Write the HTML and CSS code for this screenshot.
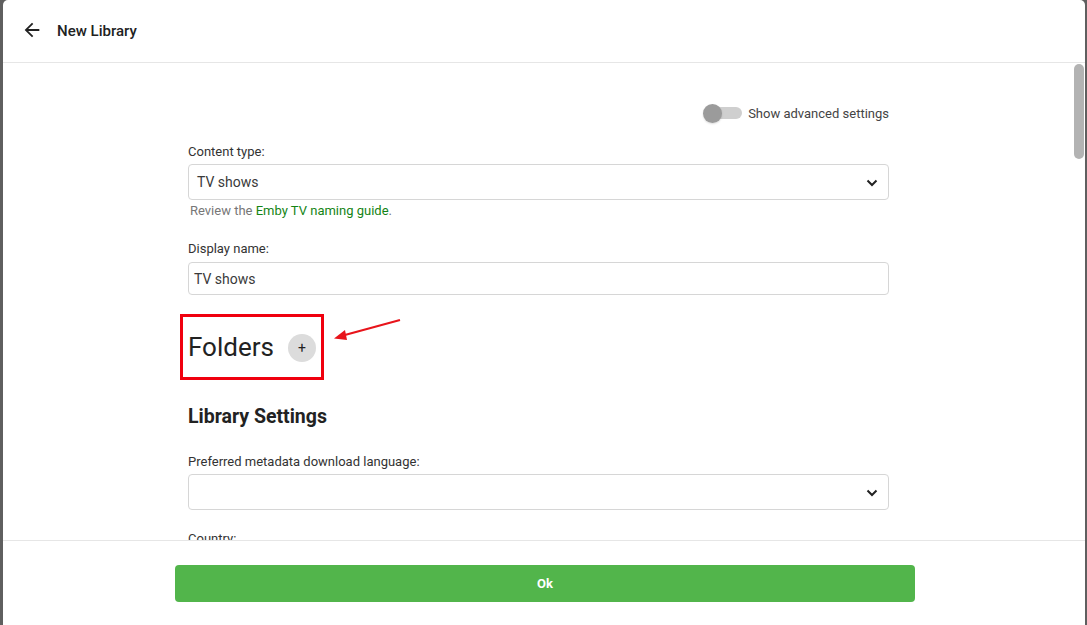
FILE: index.html
```html
<!DOCTYPE html>
<html>
<head>
<meta charset="utf-8">
<link rel="stylesheet" href="styles.css">
</head>
<body>
<div class="dialog">
  <header class="header">
    <button class="back" aria-label="Back">
      <svg viewBox="0 0 24 24" width="22" height="22"><path d="M20 11H7.83l5.59-5.59L12 4l-8 8 8 8 1.41-1.41L7.83 13H20v-2z" fill="#222"/></svg>
    </button>
    <h1 class="title">New Library</h1>
  </header>
  <div class="body">
    <div class="scroll">
      <div class="column">
        <div class="toggle-row">
          <span class="toggle"><span class="track"></span><span class="knob"></span></span>
          <span class="toggle-label">Show advanced settings</span>
        </div>

        <div class="field first">
          <div class="label">Content type:</div>
          <div class="select">
            <span>TV shows</span>
            <svg class="chev" viewBox="0 0 12 8" width="12" height="8"><polyline points="1.5,1.5 6,6 10.5,1.5" fill="none" stroke="#222" stroke-width="2"/></svg>
          </div>
          <div class="help">Review the <a class="link">Emby TV naming guide</a>.</div>
        </div>

        <div class="field second">
          <div class="label">Display name:</div>
          <div class="input">TV shows</div>
        </div>

        <div class="folders-row">
          <div class="highlight">
            <h2 class="folders">Folders</h2>
            <span class="add">+</span>
          </div>
          <svg class="arrow" width="80" height="30" viewBox="0 0 80 30">
            <line x1="71" y1="4" x2="14" y2="19.5" stroke="#e8141b" stroke-width="2.2"/>
            <polygon points="5,22.5 16,14 18,24" fill="#e8141b"/>
          </svg>
        </div>

        <h3 class="section">Library Settings</h3>

        <div class="field third">
          <div class="label">Preferred metadata download language:</div>
          <div class="select">
            <span></span>
            <svg class="chev" viewBox="0 0 12 8" width="12" height="8"><polyline points="1.5,1.5 6,6 10.5,1.5" fill="none" stroke="#222" stroke-width="2"/></svg>
          </div>
        </div>

        <div class="field fourth">
          <div class="label">Country:</div>
        </div>
      </div>
    </div>
    <div class="scrollbar"><div class="thumb"></div></div>
  </div>
  <footer class="footer">
    <button class="ok">Ok</button>
  </footer>
</div>
</body>
</html>
```

FILE: styles.css
```css
* { box-sizing: border-box; }
html, body {
  margin: 0;
  height: 100%;
}
body {
  background: #5f5f5f;
  font-family: Roboto, "Liberation Sans", Arial, sans-serif;
  color: #333;
  overflow: hidden;
}
.dialog {
  margin-left: 3px;
  width: 1082px;
  height: 625px;
  background: #fff;
  border-radius: 5px 5px 0 0;
  display: flex;
  flex-direction: column;
}
.header {
  height: 63px;
  flex: none;
  border-bottom: 1px solid #e6e6e6;
  display: flex;
  align-items: center;
  padding-left: 18px;
}
.back {
  border: 0;
  background: none;
  padding: 0;
  width: 22px;
  height: 22px;
  display: flex;
  margin-top: -2px;
}
.title {
  margin: 0 0 0 14px;
  font-size: 15px;
  font-weight: 500;
  color: #222;
  margin-top: -1px;
}
.body {
  flex: 1;
  display: flex;
  min-height: 0;
}
.scroll {
  flex: 1;
  overflow: hidden;
  display: flex;
  justify-content: center;
}
.column {
  width: 701px;
  padding-top: 40px;
}
.scrollbar {
  width: 11px;
  flex: none;
  padding-top: 1px;
  padding-right: 1px;
}
.thumb {
  height: 95px;
  background: #b3b3b3;
  border-radius: 5px;
}
.toggle-row {
  display: flex;
  justify-content: flex-end;
  align-items: center;
  height: 20px;
}
.toggle {
  position: relative;
  width: 39px;
  height: 20px;
  display: inline-block;
}
.track {
  position: absolute;
  left: 2px;
  right: 0;
  top: 4px;
  height: 12px;
  border-radius: 6px;
  background: #cfcfcf;
}
.knob {
  position: absolute;
  left: 0;
  top: 1px;
  width: 19px;
  height: 19px;
  border-radius: 50%;
  background: #9b9b9b;
  box-shadow: 0 1px 2px rgba(0,0,0,0.15);
}
.toggle-label {
  margin-left: 6px;
  font-size: 13px;
  color: #444;
}
.label {
  font-size: 13px;
  line-height: 16px;
  color: #333;
  margin-bottom: 4px;
}
.field.first { margin-top: 21px; }
.field.second { margin-top: 22px; }
.field.second .label { margin-bottom: 5px; }
.field.third { margin-top: 25px; }
.field.fourth { margin-top: 21px; }
.select {
  height: 36px;
  border: 1px solid #d6d6d6;
  border-radius: 4px;
  display: flex;
  align-items: center;
  justify-content: space-between;
  padding: 0 9px 0 8px;
  font-size: 14px;
  color: #3a3a3a;
}
.chev { margin-right: 1px; margin-top: 1px; }
.help {
  font-size: 13px;
  line-height: 16px;
  color: #777;
  margin-top: 3px;
  padding-left: 2px;
}
.link {
  color: #148414;
}
.input {
  height: 33px;
  border: 1px solid #d6d6d6;
  border-radius: 4px;
  display: flex;
  align-items: center;
  padding-left: 5px;
  font-size: 14px;
  color: #3a3a3a;
}
.folders-row {
  position: relative;
  margin-top: 19px;
  display: flex;
}
.highlight {
  margin-left: -8px;
  border: 3px solid #f0000e;
  height: 66px;
  width: 144px;
  display: flex;
  align-items: center;
  padding-left: 5px;
}
.folders {
  margin: 0;
  font-size: 26px;
  font-weight: 400;
  color: #222;
  line-height: 30px;
}
.add {
  margin-left: 14px;
  width: 28px;
  height: 28px;
  border-radius: 50%;
  background: #dcdcdc;
  display: flex;
  align-items: center;
  justify-content: center;
  font-size: 14px;
  color: #222;
  margin-top: 2px;
}
.arrow {
  position: absolute;
  left: 141px;
  top: 2px;
}
.section {
  margin: 25px 0 0;
  font-size: 19.5px;
  line-height: 24px;
  font-weight: 700;
  color: #222;
}
.footer {
  flex: none;
  height: 85px;
  border-top: 1px solid #e6e6e6;
  display: flex;
  justify-content: center;
  padding-top: 24px;
}
.ok {
  width: 740px;
  height: 37px;
  border: 0;
  border-radius: 4px;
  background: #52b54b;
  color: #fff;
  font-family: Roboto, "Liberation Sans", Arial, sans-serif;
  font-size: 13px;
  font-weight: 700;
  margin-left: 2px;
}
```
